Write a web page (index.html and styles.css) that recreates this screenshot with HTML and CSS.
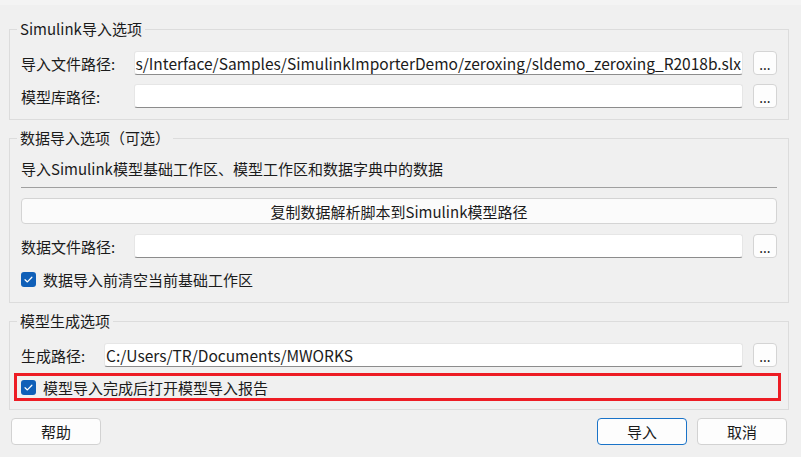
FILE: index.html
```html
<!DOCTYPE html>
<html lang="zh-CN">
<head>
<meta charset="utf-8">
<title>Simulink导入</title>
<link rel="stylesheet" href="styles.css">
</head>
<body>
<div class="topband"></div>
<div class="dialog">
  <fieldset class="group g1">
    <legend>Simulink导入选项</legend>
    <div class="row">
      <span class="label w113">导入文件路径:</span>
      <div class="field path"><span>s/Interface/Samples/SimulinkImporterDemo/zeroxing/sldemo_zeroxing_R2018b.slx</span></div>
      <button class="dots">...</button>
    </div>
    <div class="row r2">
      <span class="label w113">模型库路径:</span>
      <div class="field"></div>
      <button class="dots">...</button>
    </div>
  </fieldset>

  <fieldset class="group g2">
    <legend>数据导入选项（可选）</legend>
    <div class="desc">导入Simulink模型基础工作区、模型工作区和数据字典中的数据</div>
    <div class="sep"></div>
    <button class="wide">复制数据解析脚本到Simulink模型路径</button>
    <div class="row r3">
      <span class="label w113">数据文件路径:</span>
      <div class="field"></div>
      <button class="dots">...</button>
    </div>
    <label class="check c1"><span class="box"><svg viewBox="0 0 16 16" width="16" height="16"><path d="M4.3 8.2 L6.8 10.6 L11.6 5.6" fill="none" stroke="#fff" stroke-width="1.3" stroke-linecap="round" stroke-linejoin="round"/></svg></span>数据导入前清空当前基础工作区</label>
  </fieldset>

  <fieldset class="group g3">
    <legend>模型生成选项</legend>
    <div class="row">
      <span class="label w83">生成路径:</span>
      <div class="field path"><span>C:/Users/TR/Documents/MWORKS</span></div>
      <button class="dots">...</button>
    </div>
    <label class="check highlight"><span class="box"><svg viewBox="0 0 16 16" width="16" height="16"><path d="M4.3 8.2 L6.8 10.6 L11.6 5.6" fill="none" stroke="#fff" stroke-width="1.3" stroke-linecap="round" stroke-linejoin="round"/></svg></span>模型导入完成后打开模型导入报告</label>
  </fieldset>

  <div class="footer">
    <button class="btn">帮助</button>
    <div class="spacer"></div>
    <button class="btn primary">导入</button>
    <button class="btn">取消</button>
  </div>
</div>
</body>
</html>
```
FILE: styles.css
```css
* { box-sizing: border-box; }
html, body { margin: 0; padding: 0; }
body {
  background: #f0f0f0;
  font-family: "Noto Sans CJK SC", "Noto Sans", sans-serif;
  font-size: 15px;
  color: #1b1b1b;
  width: 801px;
  height: 457px;
  overflow: hidden;
}
.topband { height: 5px; background: #f4f4f4; }
.dialog { padding: 14px 12px 0 9px; }
.group {
  margin: 0;
  border: 1px solid #dcdcdc;
  padding: 0 11px;
  min-width: 0;
}
.group legend {
  padding: 0 3px;
  margin-left: -4px;
  line-height: 20px;
  height: 20px;
}
.g1 { padding-top: 12px; padding-bottom: 11px; }
.g2 { margin-top: 8px; padding-top: 11px; padding-bottom: 13px; }
.g3 { margin-top: 8px; padding-top: 12px; padding-bottom: 8px; }
.row { display: flex; align-items: center; height: 24px; }
.r2 { margin-top: 9px; }
.r3 { margin-top: 10px; }
.label { flex: none; white-space: nowrap; }
.w113 { width: 113px; }
.w83 { width: 83px; }
.field {
  flex: 1;
  height: 24px;
  background: #ffffff;
  border: 1px solid #e6e6e6;
  border-bottom: 1px solid #8c8c8c;
  border-radius: 3px;
  overflow: hidden;
  display: flex;
  align-items: center;
  justify-content: flex-start;
  white-space: nowrap;
  font-size: 15.5px;
  padding: 0 1px;
  min-width: 0;
}
.g1 .field.path { justify-content: flex-end; }
.dots {
  flex: none;
  margin-left: 10px;
  width: 24px;
  height: 24px;
  padding: 3px 0 0;
  background: #fdfdfd;
  border: 1px solid #d4d4d4;
  border-radius: 4px;
  font-family: "Noto Sans", sans-serif;
  font-size: 14px;
  color: #1b1b1b;
  line-height: 1;
}
.desc { line-height: 20px; height: 20px; }
.sep { height: 1px; background: #a0a0a0; margin: 8px 0 10px; }
.wide {
  display: block;
  width: 100%;
  height: 26px;
  background: #fbfbfb;
  border: 1px solid #d4d4d4;
  border-radius: 4px;
  font-family: inherit;
  font-size: 15px;
  color: #1b1b1b;
  padding: 0;
}
.check {
  display: flex;
  align-items: center;
  height: 20px;
  gap: 7px;
}
.c1 { margin-top: 11px; }
.box {
  width: 15px;
  height: 15px;
  border-radius: 3px;
  background: #0f5fb8;
  display: flex;
  align-items: center;
  justify-content: center;
  flex: none;
}
.box svg { width: 15px; height: 15px; }
.highlight {
  margin: 6px -4px 0 -7px;
  height: 28px;
  border: 3px solid #ed1c24;
  padding-left: 4px;
}
.footer {
  display: flex;
  margin-top: 8px;
  gap: 10px;
  padding-left: 2px;
  padding-right: 2px;
}
.spacer { flex: 1; }
.btn {
  width: 90px;
  height: 27px;
  background: #fdfdfd;
  border: 1px solid #d2d2d2;
  border-radius: 4px;
  font-family: inherit;
  font-size: 15px;
  color: #1b1b1b;
  padding: 0;
}
.btn.primary { border-color: #1a73c8; }
```
